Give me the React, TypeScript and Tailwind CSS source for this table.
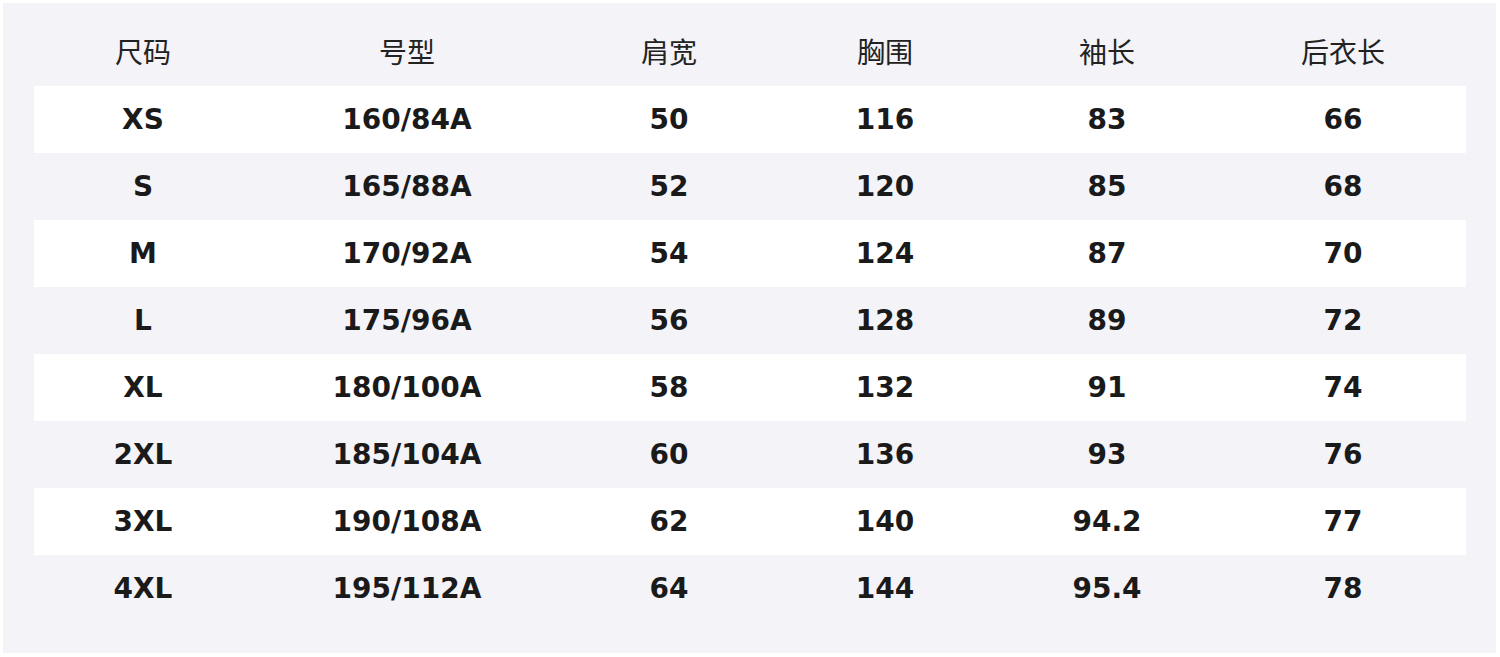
const headers = ['尺码', '号型', '肩宽', '胸围', '袖长', '后衣长'];

const rows = [
  ['XS', '160/84A', '50', '116', '83', '66'],
  ['S', '165/88A', '52', '120', '85', '68'],
  ['M', '170/92A', '54', '124', '87', '70'],
  ['L', '175/96A', '56', '128', '89', '72'],
  ['XL', '180/100A', '58', '132', '91', '74'],
  ['2XL', '185/104A', '60', '136', '93', '76'],
  ['3XL', '190/108A', '62', '140', '94.2', '77'],
  ['4XL', '195/112A', '64', '144', '95.4', '78'],
];

const cols = 'grid grid-cols-[218px_310px_214px_218px_226px_246px]';

const App = () => {
  return (
    <div className="w-[1500px] h-[657px] bg-white pt-[3px] pl-[3px] pr-[4px] pb-[4px]">
      <div className="h-full bg-[#f3f3f8] pt-4 pl-[31px] pr-[30px]">
        {/* Header */}
        <div className={`${cols} h-[67px] pb-[4px] items-center text-[28px] text-[#222] font-['Noto_Sans_CJK_SC',sans-serif]`}>
          {headers.map((h) => (
            <div key={h} className="text-center leading-none">{h}</div>
          ))}
        </div>

        {/* Body */}
        {rows.map((r, i) => (
          <div
            key={r[0]}
            className={`${cols} h-[67px] pt-[1px] items-center text-[28px] font-bold text-[#1a1a1a] font-['DejaVu_Sans',sans-serif] ${i % 2 === 0 ? 'bg-white' : ''}`}
          >
            {r.map((c, j) => (
              <div key={j} className="text-center leading-none">{c}</div>
            ))}
          </div>
        ))}
      </div>
    </div>
  );
};

export default App;
